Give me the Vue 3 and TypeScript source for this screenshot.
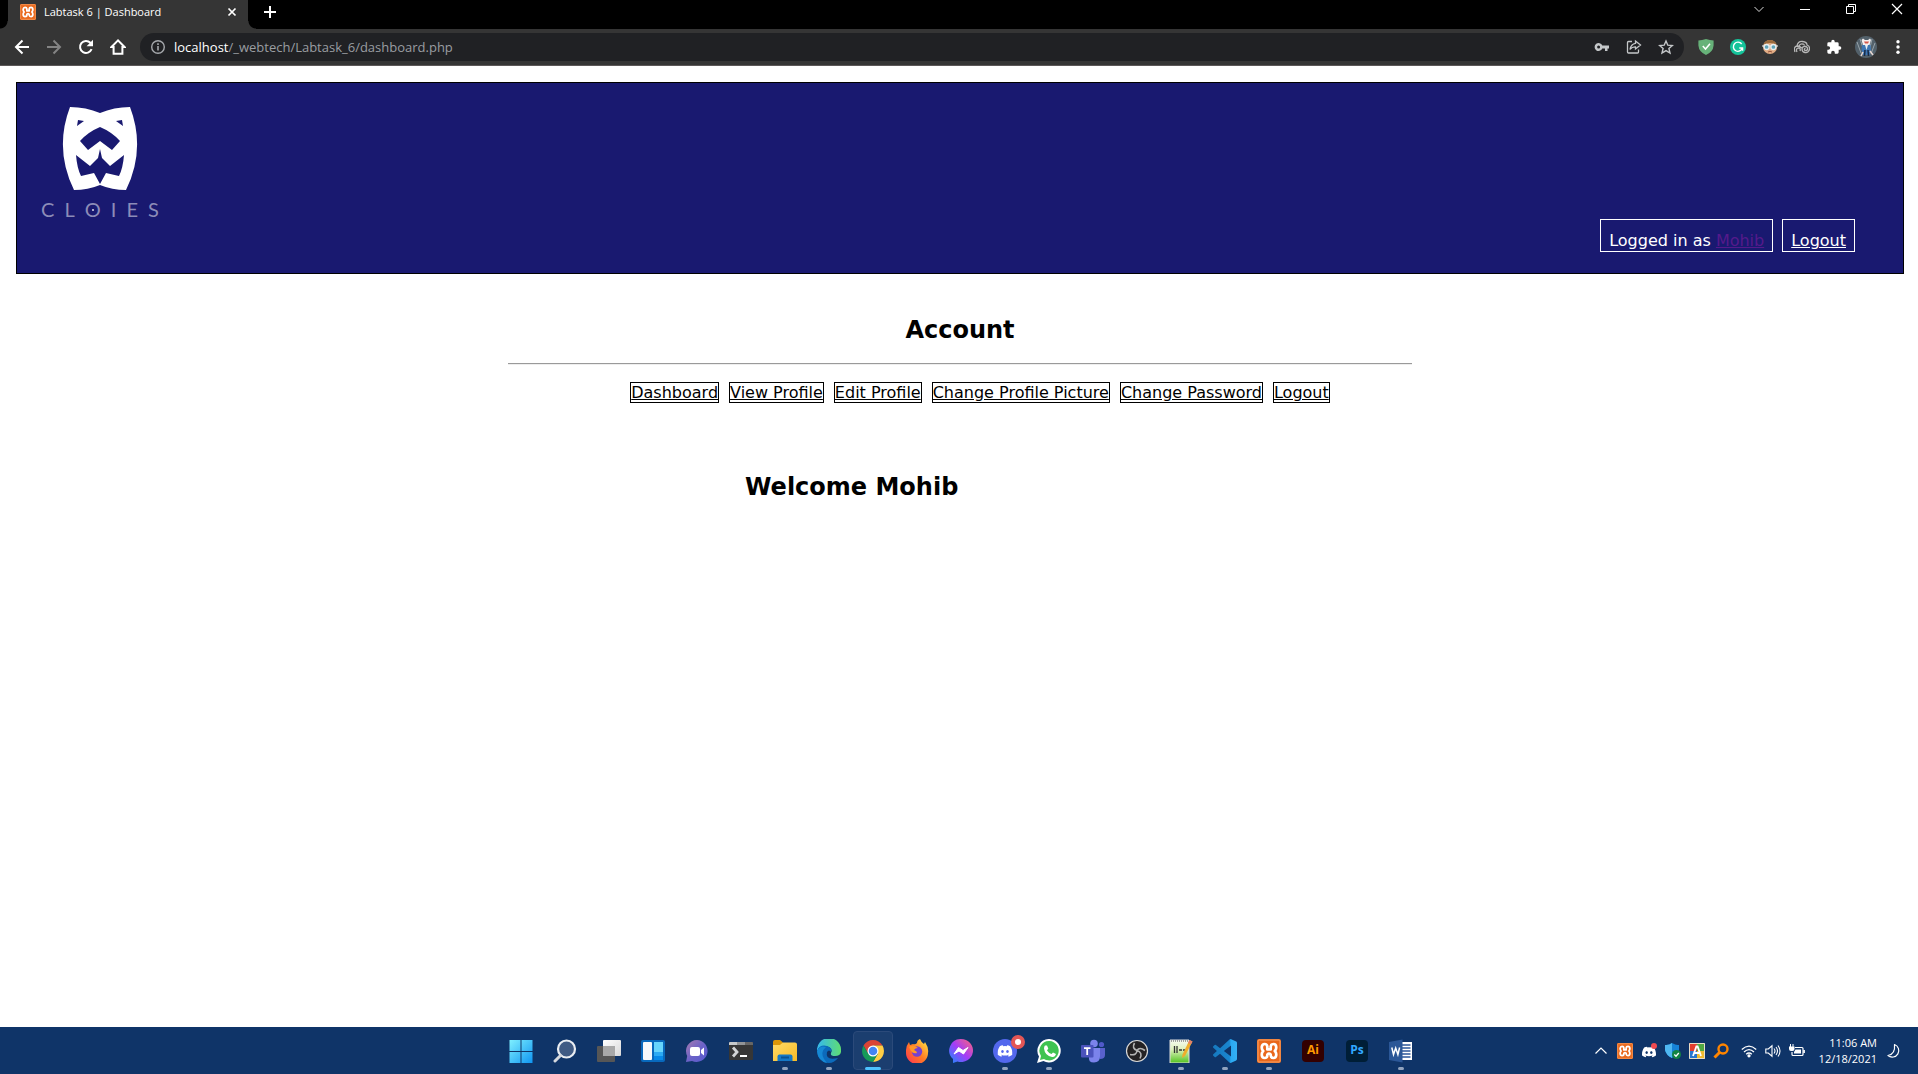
<script setup lang="ts">
interface NavLink {
  label: string
  href: string
}

const userName = 'Mohib'
const logoLetters: string[] = ['C', 'L', 'O', 'I', 'E', 'S']
const links: NavLink[] = [
  { label: 'Dashboard', href: '#dashboard' },
  { label: 'View Profile', href: '#view' },
  { label: 'Edit Profile', href: '#edit' },
  { label: 'Change Profile Picture', href: '#picture' },
  { label: 'Change Password', href: '#password' },
  { label: 'Logout', href: '#logout' },
]
</script>

<template>
  <div class="screen">
    <svg class="defs" aria-hidden="true">
      <defs>
        <symbol id="xampp" viewBox="0 0 24 24">
          <rect width="24" height="24" rx="2" fill="#e9681c" />
          <rect x="1" y="1" width="22" height="22" rx="1" fill="none" stroke="#f7a468" />
          <path d="M12 10.400H10.300V7.500Q10 5 7.600 5T4.800 7.800V9Q4.800 10.500 6.200 12Q4.800 13.500 4.800 15V16.200Q5 19 7.600 19T10.300 16.500V15.500Q12 13.500 13.700 15.500V16.500Q14 19 16.500 19T19.200 16.200V15Q19.200 13.500 17.800 12Q19.200 10.500 19.200 9V7.800Q19 5 16.500 5T13.700 7.500V10.400Z" fill="none" stroke="#fff" stroke-width="2.700" stroke-linejoin="round" />
        </symbol>
        <symbol id="discord" viewBox="0 0 24 24">
          <path d="M20.300 4.400A19.800 19.800 0 0 0 15.400 2.900L14.700 4.200A18.300 18.300 0 0 0 9.300 4.200L8.600 2.900A19.800 19.800 0 0 0 3.700 4.400C.5 9-.3 13.600.1 18.100A19.900 19.900 0 0 0 6.100 21.100L7.300 19.100L5.400 18.200L5.900 17.800C9.800 19.600 14.200 19.600 18.100 17.800L18.600 18.200L16.700 19.100L17.900 21.100A19.900 19.900 0 0 0 23.900 18.100C24.400 12.900 23.100 8.400 20.300 4.400ZM8 15.300C5.200 15.300 5.200 10.500 8 10.500S10.800 15.300 8 15.300ZM16 15.300C13.200 15.300 13.200 10.500 16 10.500S18.800 15.300 16 15.300Z" fill="#fff" />
        </symbol>
        <linearGradient id="win" x1="0" y1="0" x2="1" y2="1"><stop offset="0" stop-color="#7ff0ff" /><stop offset="1" stop-color="#0f95f2" /></linearGradient>
        <linearGradient id="pane" x1="0" y1="0" x2="1" y2="1"><stop offset="0" stop-color="#fff" /><stop offset="1" stop-color="#d8d8d8" /></linearGradient>
        <linearGradient id="chat" x1="0" y1="0" x2="1" y2="1"><stop offset="0" stop-color="#a77cb0" /><stop offset=".5" stop-color="#6c63c7" /><stop offset="1" stop-color="#5659cf" /></linearGradient>
        <linearGradient id="folder" x1="0" y1="0" x2="1" y2="1"><stop offset="0" stop-color="#ffda68" /><stop offset="1" stop-color="#f8bb25" /></linearGradient>
        <linearGradient id="edgeTop" x1="0" y1="0" x2="1" y2="0"><stop offset="0" stop-color="#35b8ee" /><stop offset="1" stop-color="#5fdd72" /></linearGradient>
        <linearGradient id="fox" x1="0" y1="1" x2="1" y2="0"><stop offset="0" stop-color="#ff2f58" /><stop offset=".5" stop-color="#ff7b22" /><stop offset="1" stop-color="#fff04a" /></linearGradient>
        <linearGradient id="msg" x1="0" y1="1" x2="1" y2="0"><stop offset="0" stop-color="#168dff" /><stop offset=".5" stop-color="#a53cf8" /><stop offset="1" stop-color="#ff6675" /></linearGradient>
        <linearGradient id="note" x1="0" y1="0" x2="0" y2="1"><stop offset="0" stop-color="#f8fbf2" /><stop offset=".4" stop-color="#dff1bd" /><stop offset="1" stop-color="#51c31f" /></linearGradient>
        <linearGradient id="code" x1="0" y1="0" x2="1" y2="0"><stop offset="0" stop-color="#1679bf" /><stop offset=".68" stop-color="#1a86cf" /><stop offset=".75" stop-color="#2aa9f2" /><stop offset="1" stop-color="#35b0f5" /></linearGradient>
      </defs>
    </svg>

    <div class="browser">
      <div class="tabs">
        <div class="tab">
          <svg class="i16"><use href="#xampp" /></svg>
          <span class="tab-title">Labtask 6 | Dashboard</span>
          <button class="tab-close" aria-label="Close tab"><svg class="i16" viewBox="0 0 16 16"><path d="M4.500 4.500L11.500 11.500M11.500 4.500L4.500 11.500" stroke="#fff" stroke-width="1.700" /></svg></button>
        </div>
        <button class="new-tab" aria-label="New tab"><svg class="i16" viewBox="0 0 16 16"><path d="M8 2V14M2 8H14" stroke="#fff" stroke-width="2" /></svg></button>
        <div class="controls">
          <button aria-label="Search tabs"><svg class="i16" viewBox="0 0 16 16"><path d="M3.500 6L8 10.500L12.500 6" fill="none" stroke="#ddd" /></svg></button>
          <button aria-label="Minimize"><svg class="i16" viewBox="0 0 16 16"><path d="M3 8.500H13" stroke="#fff" /></svg></button>
          <button aria-label="Restore"><svg class="i16" viewBox="0 0 16 16"><path d="M3.500 5.500H10.500V12.500H3.500ZM5.500 5V3.500H12.500V10.500H11" fill="none" stroke="#fff" /></svg></button>
          <button aria-label="Close"><svg class="i16" viewBox="0 0 16 16"><path d="M3 3L13 13M13 3L3 13" stroke="#fff" stroke-width="1.200" /></svg></button>
        </div>
      </div>

      <div class="toolbar">
        <button class="tool" aria-label="Back"><svg class="i16" viewBox="0 0 16 16"><path d="M15 8H2.500M8.500 1.500L2 8L8.500 14.500" fill="none" stroke="#fff" stroke-width="2" /></svg></button>
        <button class="tool" aria-label="Forward"><svg class="i16" viewBox="0 0 16 16"><path d="M1 8H13.500M7.500 1.500L14 8L7.500 14.500" fill="none" stroke="#848484" stroke-width="2" /></svg></button>
        <button class="tool" aria-label="Reload"><svg class="i16" viewBox="0 0 16 16"><path d="M13.600 10.200A6 6 0 1 1 12.400 3.800L14 5.500" fill="none" stroke="#fff" stroke-width="2" /><path d="M15 .8V7.200H8.600Z" fill="#fff" /></svg></button>
        <button class="tool" aria-label="Home"><svg class="i16" viewBox="0 0 16 16"><path d="M8 1.400L1.500 8H3.600V14.700H12.400V8H14.500Z" fill="none" stroke="#fff" stroke-width="2" /></svg></button>
        <div class="omnibox">
          <button class="tool info" aria-label="Site information"><svg class="i16" viewBox="0 0 16 16"><circle cx="8" cy="8" r="6.300" fill="none" stroke="#a5a8ac" stroke-width="1.400" /><path d="M8 7V11.500M8 4.300V6" stroke="#a5a8ac" stroke-width="1.600" /></svg></button>
          <span class="url"><b>localhost</b>/_webtech/Labtask_6/dashboard.php</span>
          <button class="tool" aria-label="Passwords"><svg class="i16" viewBox="0 0 16 16"><path d="M8.300 6.500A4 4 0 1 0 8.300 9.500H11V12H13.500V9.500H15V6.500ZM4.600 9.500A1.500 1.500 0 1 1 4.600 6.500A1.500 1.500 0 1 1 4.600 9.500Z" fill="#c4c7c9" /></svg></button>
          <button class="tool" aria-label="Share"><svg class="i16" viewBox="0 0 16 16"><path d="M6 2.500H2.500Q1.500 2.500 1.500 3.500V13Q1.500 14 2.500 14H11.500Q12.500 14 12.500 13V10.500M9.500 2L14.500 6L9.500 10V7.800Q6 7.600 4 10.500Q5 4.800 9.500 4.300Z" fill="none" stroke="#c4c7c9" stroke-width="1.300" /></svg></button>
          <button class="tool" aria-label="Bookmark"><svg class="i16" viewBox="0 0 16 16"><path d="M8 2L9.800 6.200L14.300 6.500L10.900 9.500L12 14L8 11.600L4 14L5.100 9.500L1.700 6.500L6.200 6.200Z" fill="none" stroke="#c4c7c9" stroke-width="1.400" /></svg></button>
        </div>
        <button class="tool" aria-label="Ad blocker"><svg class="i16" viewBox="0 0 16 16"><path d="M8 0Q12 1 15.600 1.600V6.500Q15 13 8 16Q1 13 .4 6.500V1.600Q4 1 8 0Z" fill="#67b279" /><path d="M4.800 7L7.500 10L12 4.700" fill="none" stroke="#fff" stroke-width="1.500" /></svg></button>
        <button class="tool" aria-label="Writing assistant"><svg class="i16" viewBox="0 0 16 16"><circle cx="8" cy="8" r="8" fill="#15c39a" /><path d="M11.700 5A4.600 4.600 0 1 0 12.400 9H9.300M12.600 9V11.800" fill="none" stroke="#fff" stroke-width="1.400" /></svg></button>
        <button class="tool" aria-label="Goggles"><svg class="i16" viewBox="0 0 16 16"><circle cx="8" cy="8" r="7" fill="#e1ab83" /><path d="M1.500 5.500Q3 1 8 1T14.500 5.500Q8 2.500 1.500 5.500" fill="#9b6b3d" /><path d="M0 7H16" stroke="#ddd" stroke-width="1.200" /><circle cx="4.600" cy="8" r="2.500" fill="#5fa3b8" stroke="#e8eef0" stroke-width="1.300" /><circle cx="11.400" cy="8" r="2.500" fill="#5fa3b8" stroke="#e8eef0" stroke-width="1.300" /><path d="M6 13Q8 11.500 10 13" stroke="#995840" fill="none" /></svg></button>
        <button class="tool" aria-label="Extension"><svg class="i16" viewBox="0 0 16 16" fill="none" stroke="#b7b7b7" stroke-width="1.300"><path d="M1 13Q-1 8 3 7Q4 2 8.500 2.500Q13 3 13 6Q16 7 15.500 10.500Q14.500 14 11 13.500Q8 13 8 10Q8.500 7 11.500 7.500Q14 8 13.500 10.500Q12 12.500 10.500 11Q10 9.500 11.500 9.500M3 13Q1.500 10 4 9Q7 9 6 12M5 7Q6 4.500 8.500 5Q10.500 5 10 6.500M3 7Q6 7 7.500 9" /></svg></button>
        <button class="tool" aria-label="Extensions"><svg class="i16" viewBox="0 0 24 24"><path d="M20.500 11H19V7A2 2 0 0 0 17 5H13V3.500A2.500 2.500 0 0 0 8 3.500V5H4A2 2 0 0 0 2 7V10.800H3.500A2.700 2.700 0 0 1 3.500 16.200H2V20A2 2 0 0 0 4 22H7.800V20.500A2.700 2.700 0 0 1 13.200 20.500V22H17A2 2 0 0 0 19 20V16H20.500A2.500 2.500 0 0 0 20.500 11Z" fill="#fff" /></svg></button>
        <button class="tool" aria-label="Profile"><svg class="i22" viewBox="0 0 22 22"><circle cx="11" cy="11" r="11" fill="#53616b" /><path d="M2 6L6 17M5 3L8 12M17 3L14 16M20 7L16 18" stroke="#97a3aa" /><path d="M6.500 4L8 2.500L10 4H13L15 2.500L16 4L14.500 9H8Z" fill="#f4eeee" /><path d="M9 5.500H14L13 7.500H10Z" fill="#d5584c" /><path d="M7 9H15.500L16 14L14.500 19H8L6.500 14Z" fill="#3e76b3" /><path d="M10 9L11.500 14L13 9Z" fill="#e9eef2" /><path d="M8 16L6 20M15 15L18 19" stroke="#e7d7d2" stroke-width="1.500" /><path d="M10 14L9.500 20M13 14L13.500 20" stroke="#182a45" stroke-width="1.500" /></svg></button>
        <button class="tool" aria-label="Menu"><svg class="i16" viewBox="0 0 16 16" fill="#fff"><circle cx="8" cy="2.800" r="1.700" /><circle cx="8" cy="8" r="1.700" /><circle cx="8" cy="13.200" r="1.700" /></svg></button>
      </div>
    </div>

    <div class="page">
      <header class="banner">
        <div class="logo">
          <svg class="mask" viewBox="0 0 76 83" aria-label="Cloies logo">
            <path d="M8 0Q24 0 38 6Q52 0 68 0Q84 42 64 83Q50 83 38 78Q26 83 12 83Q-8 42 8 0Z" fill="#fff" />
            <path d="M16 13L22 14L15 19ZM60 13L54 14L61 19ZM38 20Q50 25 58 34L50 43L38 34L26 43L18 34Q26 25 38 20ZM38 42L40 51L48 59L62 48Q61 61 57 69L44 66L38 77L32 66L19 69Q15 61 14 48L28 59L36 51Z" fill="#191970" />
          </svg>
          <div class="wordmark"><span v-for="letter in logoLetters" :key="letter" :class="{ dotted: letter === 'O' }">{{ letter }}</span></div>
        </div>
        <div class="session">
          <div class="session-box">Logged in as <a class="user" href="#view">{{ userName }}</a></div>
          <div class="session-box"><a href="#logout">Logout</a></div>
        </div>
      </header>

      <main class="account">
        <h2>Account</h2>
        <hr>
        <nav aria-label="Account">
          <ul>
            <li v-for="link in links" :key="link.label"><a :href="link.href">{{ link.label }}</a></li>
          </ul>
        </nav>
        <h2 class="welcome">Welcome {{ userName }}</h2>
      </main>
    </div>

    <footer class="taskbar">
      <div class="apps">
        <button class="app" aria-label="Start"><svg class="i24" viewBox="0 0 24 24"><path d="M.5 1H11.500V12H.5ZM12.500 1H23.500V12H12.500ZM.5 13H11.500V24H.5ZM12.500 13H23.500V24H12.500Z" fill="url(#win)" /></svg></button>
        <button class="app" aria-label="Search"><svg class="i24" viewBox="0 0 24 24"><circle cx="13.500" cy="10" r="8.500" fill="#405b84" stroke="#e9edf2" stroke-width="2.200" /><path d="M7.500 16.500L2 22" stroke="#d6d9de" stroke-width="3" stroke-linecap="round" /></svg></button>
        <button class="app" aria-label="Task view"><svg class="i24" viewBox="0 0 24 24"><rect y="7" width="18" height="16" rx="1" fill="#565656" /><rect x="6" y="1" width="18" height="16" rx="1" fill="url(#pane)" /><path d="M6 7H18V17H6Z" fill="#a8a8a8" /></svg></button>
        <button class="app" aria-label="Widgets"><svg class="i24" viewBox="0 0 24 24"><rect y="1" width="24" height="22" rx="2" fill="#0869bd" /><rect x="2" y="3" width="9" height="18" rx="1" fill="#f5f9fc" /><path d="M13 3H22V13H13Z" fill="#67d5fc" /><path d="M13 13H22V17H13Z" fill="#2cabf4" /><path d="M13 17H22V21H13Z" fill="#078ae9" /></svg></button>
        <button class="app" aria-label="Chat"><svg class="i24" viewBox="0 0 24 24"><path d="M12 1A11 11 0 1 1 7 22L1 23L2.200 17A11 11 0 0 1 12 1Z" fill="url(#chat)" /><rect x="5" y="8" width="10" height="9" rx="2" fill="#fff" /><path d="M16 11L19 8.500V16.500L16 14Z" fill="#fff" /></svg></button>
        <button class="app" aria-label="Terminal"><svg class="i24" viewBox="0 0 24 24"><rect y="3" width="24" height="18" rx="1" fill="#363636" /><path d="M0 6V4Q0 3 1 3H8V6Z" fill="#c7c9cb" /><path d="M8 3H16V6H8Z" fill="#929496" /><path d="M16 3H23Q24 3 24 4V6H16Z" fill="#666" /><path d="M4 8.500L8 13L4 17.500" fill="none" stroke="#d2d4d6" stroke-width="2.800" /><path d="M11 17H18" stroke="#fff" stroke-width="2" /></svg></button>
        <button class="app running" aria-label="File Explorer"><svg class="i24" viewBox="0 0 24 24"><path d="M0 3Q0 1 2 1H7L10 3.500L8 7H0Z" fill="#dc9608" /><path d="M8 5L10 3.500H22Q24 3.500 24 5.500V22H0V6H7Z" fill="url(#folder)" /><path d="M4.500 22V17.500Q4.500 15.500 6.500 15.500H17.500Q19.500 15.500 19.500 17.500V22Z" fill="#1478c6" /><path d="M8 18.500H16" stroke="#0a5394" stroke-width="2" /></svg></button>
        <button class="app running" aria-label="Edge"><svg class="i24" viewBox="0 0 24 24"><path d="M0 12A12 12 0 0 1 24 10Q25 17 18 17Q13 17 14 14Q16 10 12 8Q4 5 0 12Z" fill="url(#edgeTop)" /><path d="M0 12Q3 5 10 7Q16 9 14 13Q12 10 10 13Q8 22 21 19Q17 24 12 24A12 12 0 0 1 0 12Z" fill="#0c6abb" /><path d="M0 12Q3 6 9 8Q3 13 7 20L10 24Q1 22 0 12Z" fill="#1688d4" /></svg></button>
        <button class="app active" aria-label="Chrome"><svg class="i24" viewBox="0 0 24 24"><path d="M2.500 6.500A11 11 0 0 1 21.500 6.500H12L7.200 14.800Z" fill="#da4435" /><path d="M21.500 6.500A11 11 0 0 1 12 23L16.800 14.800L12 6.500Z" fill="#ffce44" /><path d="M12 23A11 11 0 0 1 2.500 6.500L7.200 14.800H16.800Z" fill="#169b58" /><circle cx="12" cy="12" r="5.500" fill="#fff" /><circle cx="12" cy="12" r="4.300" fill="#4285f4" /></svg></button>
        <button class="app" aria-label="Firefox"><svg class="i24" viewBox="0 0 24 24"><path d="M1 11Q1 7 4 3L5 6L8 5Q10 6 12 4Q12 1 15 0Q16 3 19 5L20 3Q24 9 23 14A11 11 0 0 1 1 14Q1 12 1 11Z" fill="url(#fox)" /><circle cx="12" cy="12.500" r="5.200" fill="#7542cf" /><path d="M4 8Q8 5 13 9Q10 9 9 11Q12 12 12 14Q8 15 6 12Z" fill="#ff9827" /></svg></button>
        <button class="app" aria-label="Messenger"><svg class="i24" viewBox="0 0 24 24"><path d="M12 0A12 11.500 0 1 1 8.500 22.500L4 24V20A11.500 11.500 0 0 1 12 0Z" fill="url(#msg)" /><path d="M5 15L9.500 8.500L14 11.500L19 8.500L14.500 15L10 12Z" fill="#fff" stroke="#fff" stroke-linejoin="round" /></svg></button>
        <button class="app running" aria-label="Discord"><svg class="i24" viewBox="0 0 24 24"><circle cx="12" cy="12" r="12" fill="#5368ed" /><use href="#discord" x="4.500" y="4.500" width="15" height="15" /></svg><span class="badge"></span></button>
        <button class="app running" aria-label="WhatsApp"><svg class="i24" viewBox="0 0 24 24"><path d="M12.500 0A11.700 11.700 0 1 1 6.500 22L0 24L2 17.500A11.700 11.700 0 0 1 12.500 0Z" fill="#fff" /><path d="M12.500 2A9.700 9.700 0 1 1 7 20L3 21L4 17A9.700 9.700 0 0 1 12.500 2Z" fill="#3fc351" /><path d="M8 6.500L10 6.500L11.300 9.500L10 11.500Q12 14.500 14.500 15L16 13.500L19 15Q18 18.500 15 18Q8 17 7 9.500Q7 7.500 8 6.500Z" fill="#fff" /></svg></button>
        <button class="app" aria-label="Teams"><svg class="i24" viewBox="0 0 24 24"><circle cx="13" cy="4.500" r="3.800" fill="#7b83eb" /><circle cx="20.500" cy="5.500" r="2.600" fill="#5059c9" /><path d="M14 9H24V16Q24 20 19 20Z" fill="#5961cc" /><path d="M8 9H19V17Q19 23.500 13 23.500T8 18Z" fill="#7b83eb" /><rect y="6" width="12.500" height="12.500" rx="1" fill="#4b53bc" /><path d="M3 9.200H9.500M6.200 9V16" stroke="#fff" stroke-width="1.800" /></svg></button>
        <button class="app" aria-label="OBS"><svg class="i24" viewBox="0 0 24 24"><circle cx="12" cy="12" r="10.500" fill="#242224" stroke="#d7d7d7" stroke-width="1.200" /><path d="M9.500 4Q6.500 9.500 12 11.500Q14.500 7.500 20 11.500M12 11.500Q11.500 17 5 15.500M12 11.500Q18 13.500 15 19.500" fill="none" stroke="#b4b4b4" stroke-width="1.600" /></svg></button>
        <button class="app running" aria-label="Notepad++"><svg class="i24" viewBox="0 0 24 24"><path d="M1 1H20V24H1Z" fill="url(#note)" stroke="#ddd" /><path d="M2 2H19" stroke="#555" stroke-dasharray="1 1" /><path d="M5.500 7V14M8 7V14M10 11H13M14 11H16" stroke="#333" stroke-width="1.300" /><path d="M13 19L13.500 15.500L20.500 1L23.500 2.500L16 17Z" fill="#f0ae2b" /><path d="M20.500 1L23.500 2.500L22 5.300L19 4Z" fill="#e2806c" /></svg></button>
        <button class="app running" aria-label="Visual Studio Code"><svg class="i24" viewBox="0 0 24 24"><path d="M23.150 2.587L18.210.21a1.494 1.494 0 0 0-1.705.29l-9.460 8.630-4.120-3.128a1 1 0 0 0-1.276.057L.327 7.261A1 1 0 0 0 .326 8.740L3.899 12 .326 15.260a1 1 0 0 0 .001 1.479L1.650 17.940a1 1 0 0 0 1.276.057l4.120-3.128 9.460 8.630a1.492 1.492 0 0 0 1.704.29l4.942-2.377A1.500 1.500 0 0 0 24 20.060V3.939a1.500 1.500 0 0 0-.85-1.352zM18.004 17.448L10.826 12l7.178-5.448z" fill="url(#code)" /></svg></button>
        <button class="app running" aria-label="XAMPP"><svg class="i24"><use href="#xampp" /></svg></button>
        <button class="app" aria-label="Illustrator"><span class="adobe ai">Ai</span></button>
        <button class="app" aria-label="Photoshop"><span class="adobe ps">Ps</span></button>
        <button class="app running" aria-label="Word"><svg class="i24" viewBox="0 0 24 24"><path d="M11 3H23V21H11Z" fill="#fff" /><path d="M13 6H21.500M13 9H21.500M13 12H21.500M13 15H21.500M13 18H21.500" stroke="#2b579a" stroke-width="1.300" /><path d="M0 3L13.500 .5V23.500L0 21Z" fill="#2b5797" /><path d="M2.800 8.500L4.500 15.500L6.700 9L8.900 15.500L10.600 8.500" fill="none" stroke="#fff" stroke-width="1.500" /></svg></button>
      </div>

      <div class="tray">
        <button class="tray-item" aria-label="Hidden icons"><svg class="i16" viewBox="0 0 16 16"><path d="M2.500 10.500L8 5L13.500 10.500" fill="none" stroke="#fff" stroke-width="1.200" /></svg></button>
        <button class="tray-item" aria-label="XAMPP control"><svg class="i16"><use href="#xampp" /></svg></button>
        <button class="tray-item" aria-label="Discord status"><svg class="i16" viewBox="0 0 16 16"><use href="#discord" x="1" y="2" width="14" height="14" /><circle cx="13" cy="3" r="3" fill="#ef4a50" /></svg></button>
        <button class="tray-item" aria-label="Windows Security"><svg class="i16" viewBox="0 0 16 16"><path d="M7 0Q11 2.500 14 2V7Q13 12 7 15Q1 12 0 7V2Q4 2.500 7 0Z" fill="#1683d8" /><path d="M7 0V15Q1 12 0 7V2Q4 2.500 7 0Z" fill="#4fb7f1" /><circle cx="11.500" cy="11.500" r="4.500" fill="#128443" /><path d="M9.300 11.500L11 13.200L13.800 10" fill="none" stroke="#fff" stroke-width="1.300" /></svg></button>
        <button class="tray-item" aria-label="Keyboard"><svg class="i16" viewBox="0 0 16 16"><path d="M0 0H8V8H0Z" fill="#e33d2e" /><path d="M8 0H16V8H8Z" fill="#51aa42" /><path d="M0 8H8V16H0Z" fill="#2877cf" /><path d="M8 8H16V16H8Z" fill="#f2bd32" /><path d="M.5.5H15.500V15.500H.5Z" fill="none" stroke="#e8dfca" /><path d="M4 13L7.400 3.500H8.600L12 13M5.500 10H10.500" fill="none" stroke="#fff" stroke-width="1.800" /></svg></button>
        <button class="tray-item" aria-label="Search tool"><svg class="i16" viewBox="0 0 16 16"><circle cx="10" cy="6" r="4.500" fill="none" stroke="#ff8500" stroke-width="2.400" /><path d="M6.500 9.500L1.500 14.500" stroke="#ff8500" stroke-width="3" /></svg></button>
        <button class="tray-item wifi" aria-label="Network"><svg class="i16" viewBox="0 0 16 16" fill="none" stroke="#fff" stroke-width="1.300"><path d="M.8 6.500Q8-.3 15.200 6.500M3 9Q8 4.300 13 9M5.200 11.300Q8 8.800 10.800 11.300" /><circle cx="8" cy="12.800" r="1" fill="#fff" /></svg></button>
        <button class="tray-item" aria-label="Volume"><svg class="i16" viewBox="0 0 16 16" fill="none" stroke="#fff" stroke-width="1.100"><path d="M.8 6H3.300L7 2.800V13.200L3.300 10H.8ZM9 5.500Q11 8 9 10.500M11 4Q14 8 11 12M13 2.500Q17 8 13 13.500" /></svg></button>
        <button class="tray-item" aria-label="Battery"><svg class="i16" viewBox="0 0 16 16"><path d="M6 4.500H13Q14 4.500 14 5.500V11.500Q14 12.500 13 12.500H4Q3 12.500 3 11.500V9M15.300 7V10" fill="none" stroke="#fff" stroke-width="1.200" /><path d="M6.500 6.500H12V10.500H5V9Z" fill="#fff" /><path d="M0 3.500H5.500V6Q5.500 8 3.500 8H2Q0 8 0 6ZM1 1H2V4H1ZM3.500 1H4.500V4H3.500Z" fill="#fff" /></svg></button>
        <div class="clock"><time>11:06 AM</time><time>12/18/2021</time></div>
        <button class="tray-item moon" aria-label="Focus assist"><svg class="i16" viewBox="0 0 16 16"><path d="M8.500 1.500A6.500 6.500 0 1 1 2 12.500Q9.500 11 8.500 1.500Z" fill="none" stroke="#fff" stroke-width="1.200" stroke-linejoin="round" /></svg></button>
      </div>
    </footer>
  </div>
</template>

<style>
body { margin: 0; background: #fff; }
</style>

<style scoped>
.screen { min-height: 100vh; display: flex; flex-direction: column; font-family: "DejaVu Sans", Verdana, sans-serif; font-size: 16px; line-height: 19px; color: #000; }
.defs { position: absolute; width: 0; height: 0; }
button { appearance: none; border: 0; background: none; padding: 0; margin: 0; font: inherit; color: inherit; display: flex; align-items: center; justify-content: center; flex: none; }
svg { display: block; flex: none; }
.i16 { width: 16px; height: 16px; }
.i22 { width: 22px; height: 22px; }
.i24 { width: 24px; height: 24px; }

.browser { background: #000; font-family: "Open Sans", "Noto Sans", sans-serif; color: #fff; }
.tabs { display: flex; height: 29px; padding-left: 8px; }
.tab { width: 240px; box-sizing: border-box; display: flex; align-items: center; padding: 0 8px 5px 12px; background: #353535; position: relative; }
.tab::before, .tab::after { content: ""; position: absolute; bottom: 0; width: 8px; height: 8px; }
.tab::before { right: 100%; background: radial-gradient(circle at 0 0, #000 7px, #353535 8px); }
.tab::after { left: 100%; background: radial-gradient(circle at 100% 0, #000 7px, #353535 8px); }
.tab-title { flex: 1; margin-left: 8px; font-size: 11px; line-height: 16px; white-space: nowrap; }
.new-tab { width: 44px; height: 24px; }
.controls { margin: 0 -2px 0 auto; display: flex; height: 18px; }
.controls button { width: 46px; height: 18px; }
.toolbar { display: flex; align-items: center; height: 36px; padding: 0 4px 0 6px; background: #353535; border-bottom: 1px solid #5c5858; }
.tool { width: 32px; height: 28px; }
.omnibox { flex: 1; display: flex; align-items: center; height: 28px; margin: 0 6px; padding: 0 2px; border-radius: 14px; background: #202124; }
.url { flex: 1; font-size: 13px; line-height: 18px; color: #9a9da1; white-space: nowrap; }
.url b { font-weight: 400; color: #fff; }

.page { flex: 1; padding: 16px 14px 16px 16px; background: #fff; }
.banner { display: flex; justify-content: space-between; align-items: flex-end; min-height: 190px; border: 1px solid #000; background: #191970; }
.logo { align-self: flex-start; width: 118px; margin: 24px; display: flex; flex-direction: column; align-items: center; gap: 9px; }
.mask { width: 76px; height: 83px; }
.wordmark { align-self: stretch; display: flex; justify-content: space-between; font-family: Lato, sans-serif; font-weight: 400; font-size: 20px; line-height: 20px; color: #8c8cb8; }
.dotted { position: relative; }
.dotted::after { content: ""; position: absolute; left: 50%; top: 50%; width: 2px; height: 2px; margin: 0 -1px; background: #a9a9cb; }
.session { display: flex; gap: 9px; margin: 0 48px 21px 0; color: #fff; }
.session-box { border: 1px solid #fff; padding: 11px 8px 1px; white-space: nowrap; }
.session-box a { color: #fff; }
.session-box a.user { color: #551a8b; }

.account { width: 904px; max-width: 100%; margin: 0 auto; }
h2 { margin: 0; padding: 41px 0 18px; font-size: 24px; line-height: 30px; text-align: center; }
hr { margin: 0; border: 0; border-top: 1px solid #9a9a9a; border-bottom: 1px solid #eee; }
ul { display: flex; justify-content: center; gap: 10px; margin: 17px 0 0; padding: 0 0 0 40px; list-style: none; }
li { border: 1px solid #000; white-space: nowrap; }
li a { display: block; color: #000; }
.welcome { padding: 69px 0 0 237px; text-align: left; }

.taskbar { display: grid; grid-template-columns: 1fr auto 1fr; align-items: center; height: 47px; padding-left: 4px; background: #0f3468; color: #fff; font-family: "Open Sans", "Noto Sans", sans-serif; }
.apps { grid-column: 2; display: flex; }
.app { position: relative; width: 44px; height: 47px; }
.app.active::before { content: ""; position: absolute; inset: 4px 2px; border: 1px solid #2b4a7a; border-radius: 4px; background: #ffffff0d; }
.app svg { position: relative; }
.app.running::after, .app.active::after { content: ""; position: absolute; bottom: 4px; left: 19px; width: 6px; height: 3px; border-radius: 2px; background: #91a3be; }
.app.active::after { left: 14px; width: 16px; background: #4cc2ff; }
.badge { position: absolute; top: 8px; right: 2px; width: 6px; height: 6px; border: 4px solid #e35656; border-radius: 50%; background: #fff; }
.adobe { width: 22px; height: 22px; border-radius: 4px; font-size: 12px; line-height: 20px; font-weight: 700; }
.ai { background: #330000; color: #ff9a00; }
.ps { background: #001e36; color: #31a8ff; }
.tray { justify-self: end; display: flex; align-items: center; }
.tray-item { width: 24px; height: 40px; }
.wifi { margin-left: 4px; }
.clock { display: flex; flex-direction: column; align-items: flex-end; margin-left: 10px; font-size: 11px; line-height: 16px; }
.moon { margin: 0 12px 0 5px; }
</style>
